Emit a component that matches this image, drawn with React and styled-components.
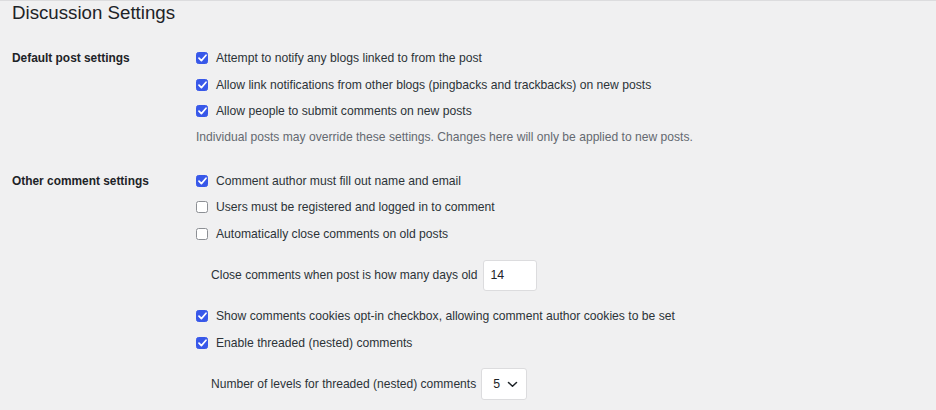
import React from "react";
import styled, { createGlobalStyle } from "styled-components";

const Global = createGlobalStyle`
  html, body { margin: 0; padding: 0; background: #f0f0f1; }
  body {
    font-family: "Liberation Sans", Arial, sans-serif;
    color: #1d2327;
    -webkit-font-smoothing: antialiased;
  }
`;

const Page = styled.div`
  width: 936px;
  height: 410px;
  box-sizing: border-box;
  border-top: 1px solid #dcdcde;
  padding: 0 0 0 12px;
  overflow: hidden;
`;

const Title = styled.h1`
  margin: 0;
  font-size: 18.7px;
  font-weight: 400;
  line-height: 23px;
  color: #1d2327;
`;

const Section = styled.div`
  display: grid;
  grid-template-columns: 184px 1fr;
  margin-top: ${(p) => p.$top}px;
`;

const Label = styled.div`
  font-size: 11.9px;
  font-weight: 700;
  line-height: 26px;
  color: #1d2327;
`;

const Fields = styled.div`
  display: flex;
  flex-direction: column;
`;

const Row = styled.label`
  display: flex;
  align-items: center;
  gap: 8px;
  height: 26.5px;
  font-size: 12.15px;
  color: #2c3338;
`;

const Box = styled.span`
  width: 12px;
  height: 12px;
  box-sizing: border-box;
  border-radius: 2.5px;
  flex: none;
  display: flex;
  align-items: center;
  justify-content: center;
  background: ${(p) => (p.$checked ? "#3858e9" : "#fff")};
  border: 1px solid ${(p) => (p.$checked ? "#3858e9" : "#8c8f94")};
`;

const Description = styled.p`
  margin: 0;
  height: 24px;
  display: flex;
  align-items: center;
  font-size: 12.1px;
  color: #646970;
`;

const Inline = styled.div`
  display: flex;
  align-items: center;
  gap: 5px;
  padding-left: 15px;
  height: 56px;
  font-size: 12.05px;
  color: #2c3338;
`;

const NumberField = styled.div`
  width: 54px;
  height: 31px;
  box-sizing: border-box;
  background: #fff;
  border: 1px solid #dcdcde;
  border-radius: 3px;
  display: flex;
  align-items: center;
  padding-left: 7px;
  font-size: 12.3px;
  color: #1d2327;
`;

const SelectField = styled.div`
  width: 46px;
  height: 32px;
  box-sizing: border-box;
  background: #fff;
  border: 1px solid #dcdcde;
  border-radius: 3px;
  display: flex;
  align-items: center;
  gap: 7px;
  padding-left: 11px;
  font-size: 12.3px;
  color: #1d2327;
`;

const Check = () => (
  <svg width="9" height="8" viewBox="0 0 9 8">
    <path d="M1 4.2 L3.4 6.6 L8 1.2" fill="none" stroke="#fff" strokeWidth="1.7" strokeLinecap="round" strokeLinejoin="round" />
  </svg>
);

const Checkbox = ({ checked, children }) => (
  <Row>
    <Box $checked={checked}>{checked && <Check />}</Box>
    {children}
  </Row>
);

export default function App() {
  return (
    <>
      <Global />
      <Page>
        <Title>Discussion Settings</Title>
        <Section $top={21}>
          <Label>Default post settings</Label>
          <Fields>
            <Checkbox checked>Attempt to notify any blogs linked to from the post</Checkbox>
            <Checkbox checked>Allow link notifications from other blogs (pingbacks and trackbacks) on new posts</Checkbox>
            <Checkbox checked>Allow people to submit comments on new posts</Checkbox>
            <Description>Individual posts may override these settings. Changes here will only be applied to new posts.</Description>
          </Fields>
        </Section>
        <Section $top={19}>
          <Label>Other comment settings</Label>
          <Fields>
            <Checkbox checked>Comment author must fill out name and email</Checkbox>
            <Checkbox>Users must be registered and logged in to comment</Checkbox>
            <Checkbox>Automatically close comments on old posts</Checkbox>
            <Inline>
              Close comments when post is how many days old
              <NumberField>14</NumberField>
            </Inline>
            <Checkbox checked>Show comments cookies opt-in checkbox, allowing comment author cookies to be set</Checkbox>
            <Checkbox checked>Enable threaded (nested) comments</Checkbox>
            <Inline>
              Number of levels for threaded (nested) comments
              <SelectField>
                5
                <svg width="11" height="7" viewBox="0 0 11 7">
                  <path d="M1.5 1.5 L5.5 5.3 L9.5 1.5" fill="none" stroke="#1d2327" strokeWidth="1.5" strokeLinecap="round" strokeLinejoin="round" />
                </svg>
              </SelectField>
            </Inline>
          </Fields>
        </Section>
      </Page>
    </>
  );
}
